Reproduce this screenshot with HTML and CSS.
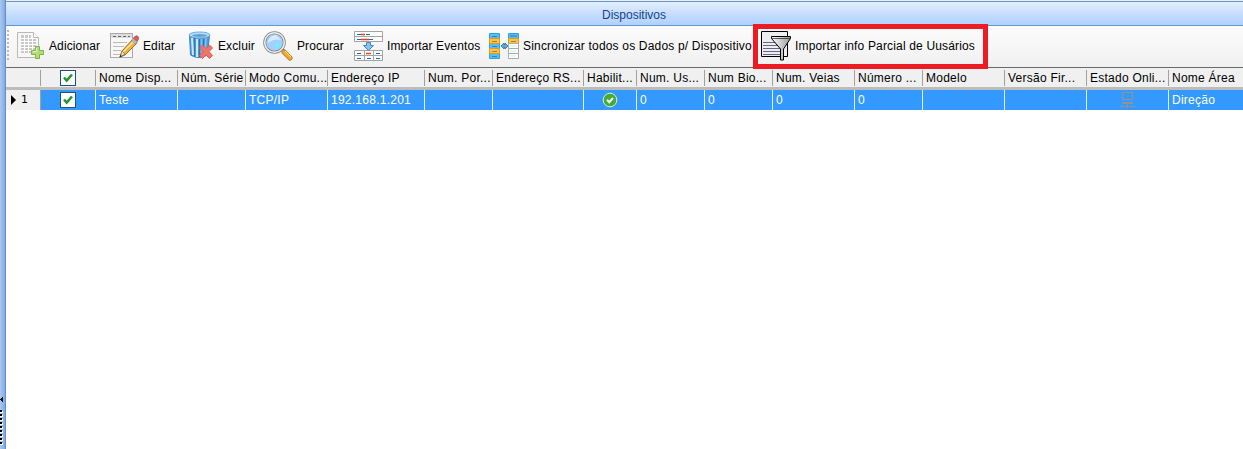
FILE: index.html
```html
<!DOCTYPE html>
<html lang="pt">
<head>
<meta charset="utf-8">
<title>Dispositivos</title>
<link rel="stylesheet" href="styles.css">
</head>
<body>
<div class="app">
  <aside class="splitter">
    <svg class="collapse" width="5" height="54" viewBox="0 0 5 54" shape-rendering="crispEdges">
      <path d="M3 0v7L0 3.500z" fill="#111"/>
      <path d="M1 15v34" stroke="#fff" stroke-width="4" stroke-dasharray="2 2"/>
      <path d="M.5 14v34" stroke="#000" stroke-width="3" stroke-dasharray="2 2"/>
    </svg>
  </aside>
  <main class="panel">
    <h1 class="title">Dispositivos</h1>
    <nav class="toolbar">
      <span class="grip"></span>
      <button class="tool add">
        <svg width="30" height="30" viewBox="0 0 30 30">
          <path d="M.5 1.500h16l5 5v20H.5z" fill="#f7f7f7" stroke="#b9b9b9"/>
          <path d="M16.500 1.500v5h5" fill="#fff" stroke="#b9b9b9"/>
          <path d="M4 4h10v4h5v14H4z" fill="#c8c8c8"/>
          <path d="M4 7.500h15M4 10.500h15M4 13.500h15M4 16.500h15M4 19.500h15M7.500 4v18M11.500 4v18M15.500 8v14" stroke="#fff"/>
          <path d="M18.500 15.500h4v4h4v4h-4v4h-4v-4h-4v-4h4z" fill="#b5dc76" stroke="#7fb343"/>
          <path d="M19.500 17v3.500H16" fill="none" stroke="#e4f6c4"/>
        </svg><span>Adicionar</span>
      </button>
      <button class="tool edit">
        <svg width="30" height="28" viewBox="0 0 30 28">
          <rect x=".5" y="1.500" width="22" height="24" fill="#f8f8f8" stroke="#aaa"/>
          <path d="M1 2h21v4H1z" fill="#ddd"/><path d="M3 4.500h17" stroke="#666" stroke-dasharray="3 2"/>
          <path d="M3 10.500h14M3 14.500h11M3 18.500h8M3 22.500h7" stroke="#bbb"/>
          <path d="M10 25l2-6L23 7l4 4-12 12z" fill="#f3b43c" stroke="#8c6b3c"/>
          <path d="M13 20L24 9" stroke="#ffe493" stroke-width="1.500"/>
          <path d="M10 25l2-6 3 3z" fill="#f4dfbd" stroke="#8c6b3c" stroke-width=".7"/><path d="M9.500 25.500l1-3 1.500 2z" fill="#333"/>
          <path d="M21.500 8l4 4 2-2-4-4z" fill="#aebdcb" stroke="#8090a0" stroke-width=".6"/>
          <path d="M23.500 6l2-2q3-1 3 3l-1.500 2.500z" fill="#e65a50" stroke="#ae3930" stroke-width=".7"/>
        </svg><span>Editar</span>
      </button>
      <button class="tool delete">
        <svg width="26" height="29" viewBox="0 0 26 29">
          <path d="M1.500 4l1 20q8 5 17 0l2-20z" fill="#4b9ade" stroke="#3b82bf"/>
          <path d="M4 7l1 17M9 8v18" stroke="#c9eaff" stroke-width="2"/><path d="M13.500 8v18M18 7l-1 18" stroke="#85c3ef" stroke-width="1.500"/>
          <path d="M6.500 7v18M11.500 8v18M15.500 8v18" stroke="#2f74b5"/>
          <ellipse cx="11.500" cy="4" rx="10.500" ry="3" fill="#b9ddf4" stroke="#6faeda"/>
          <ellipse cx="11.500" cy="4.500" rx="7.500" ry="1.500" fill="#5ca5d8"/>
          <path d="M11.500 17l3-3 3.500 3.500 3.500-3.500 3 3-3.500 3.500 3.500 4-3 3-3.500-3.500-3.500 3.500-3-3 3.500-4z" fill="#ed7468" stroke="#d85e54"/>
        </svg><span>Excluir</span>
      </button>
      <button class="tool search">
        <svg width="31" height="30" viewBox="0 0 31 30">
          <path d="M19 18l3 3" stroke="#777" stroke-width="3"/>
          <path d="M21 21l6 6" stroke="#a77528" stroke-width="5" stroke-linecap="round"/><path d="M21 21l6 6" stroke="#f3a829" stroke-width="3.500" stroke-linecap="round"/><path d="M22 20l6 6" stroke="#ffe58d"/>
          <circle cx="11.500" cy="11.500" r="9.800" fill="#a4d0ff" stroke="#858585" stroke-width="3"/>
          <circle cx="11.500" cy="11.500" r="9.800" fill="none" stroke="#eee" stroke-width="1.500"/>
          <path d="M5 12q0-7 8-8l5 5q-7-2-13 3z" fill="#d7edff"/><circle cx="14.500" cy="14.500" r="2.500" fill="#70eeff"/>
        </svg><span>Procurar</span>
      </button>
      <button class="tool events">
        <svg width="30" height="30" viewBox="0 0 30 30">
          <g fill="#fff" stroke="#a3a3a3"><path d="M.5.500h28v10H.5zM.5 19.500h28v10H.5z"/><path d="M.5 5.500h28M.5 24.500h28M10.500 19.500v10M19.500 19.500v10"/></g>
          <path d="M3 3.500h4M12 3.500h4M3 8.500h4M15 8.500h4M3 22.500h4M22 22.500h4M3 27.500h4M13 27.500h4M22 27.500h4" stroke="#1769b7"/>
          <path d="M7 3.500h4M7 8.500h8M12 22.500h5" stroke="#e34319" stroke-width="1.400"/>
          <path d="M12.500 11.500h4v3h3l-5 5-5-5h3z" fill="#8ac3f2" stroke="#4388c4"/>
        </svg><span>Importar Eventos</span>
      </button>
      <button class="tool sync">
        <svg width="30" height="26" viewBox="0 0 30 26">
          <g fill="#58bdf0" stroke="#3c9bd5"><path d="M.5.500h10v5H.5zM.5 10.500h10v5H.5zM.5 20.500h10v5H.5zM19.500.500h10v5h-10z"/></g>
          <g fill="#ffc345" stroke="#d79a2e"><path d="M.5 5.500h10v5H.5zM.5 15.500h10v5H.5zM19.500 5.500h10v5h-10z"/></g>
          <path d="M19.500 10.500h10v15h-10zM19.500 15.500h10M19.500 20.500h10" fill="#fff" stroke="#a6adad"/>
          <path d="M3 3l1 1 1-1 1 1 1-1 1 1M3 13l1 1 1-1 1 1 1-1 1 1M3 23l1 1 1-1 1 1 1-1 1 1" fill="none" stroke="#2478ac" stroke-width=".8"/>
          <path d="M3 8l1 1 1-1 1 1 1-1 1 1M3 18l1 1 1-1 1 1 1-1 1 1M22 8l1 1 1-1 1 1 1-1 1 1" fill="none" stroke="#8c742f" stroke-width=".8"/>
          <path d="M21 3h7" stroke="#1783d0"/><path d="M21 13h6M21 18h6M21 23h6" stroke="#c3f3ef"/>
          <path d="M12 13l3-3v1.500h1V10l3 3-3 3v-1.500h-1V16z" fill="#65a8d8" stroke="#3c7caf"/>
        </svg><span>Sincronizar todos os Dados p/ Dispositivo</span>
      </button>
      <button class="tool partial">
        <svg width="31" height="30" viewBox="0 0 31 30">
          <defs><linearGradient id="funnel"><stop stop-color="#fff"/><stop offset="1" stop-color="#999"/></linearGradient></defs>
          <path d="M.5.500h26v25H.5z" fill="#eeeef0" stroke="#000"/>
          <path d="M2 11.500h20M2 14.500h20M2 17.500h20M2 20.500h20M2 23.500h20" stroke="#65658a"/>
          <path d="M10.500 5.500h19v2L22.500 18v11h-3v-11L10.500 7.500z" fill="url(#funnel)" stroke="#000"/>
          <path d="M11 7.500h18" stroke="#000" stroke-width=".6"/>
        </svg><span>Importar info Parcial de Uusários</span>
      </button>
    </nav>
    <section class="table">
      <div class="row head">
        <span></span>
        <span class="center"><i class="check"><svg width="14" height="14" viewBox="0 0 14 14"><path d="M3 6.500l2.700 3L11 3.500" fill="none" stroke="#219332" stroke-width="2.500"/></svg></i></span>
        <span>Nome Disp...</span><span>Núm. Série</span><span>Modo Comu...</span><span>Endereço IP</span><span>Num. Por...</span><span>Endereço RS...</span><span>Habilit...</span><span>Num. Us...</span><span>Num Bio...</span><span>Num. Veias</span><span>Número ...</span><span>Modelo</span><span>Versão Fir...</span><span>Estado Onli...</span><span>Nome Área</span>
      </div>
      <div class="row data">
        <span class="index"><svg width="5" height="10" viewBox="0 0 5 10"><path d="M0 0l5 5-5 5z"/></svg>1</span>
        <span class="center"><i class="check"><svg width="14" height="14" viewBox="0 0 14 14"><path d="M3 6.500l2.700 3L11 3.500" fill="none" stroke="#219332" stroke-width="2.500"/></svg></i></span>
        <span>Teste</span><span></span><span>TCP/IP</span><span>192.168.1.201</span><span></span><span></span>
        <span class="center"><svg width="16" height="16" viewBox="0 0 16 16"><circle cx="8" cy="8" r="6.800" fill="#43ad36" stroke="#d4efd0"/><path d="M5 7.800l2.200 2.400L11 6" fill="none" stroke="#fff" stroke-width="2"/></svg></span>
        <span>0</span><span>0</span><span>0</span><span>0</span><span></span><span></span>
        <span class="center"><svg width="15" height="16" viewBox="0 0 15 16" fill="none" stroke="#96938f"><path d="M2.500.500h10v7h-10zM2 10.500h11M2 11.500h11M7.500 12v4M0 14.500h15"/></svg></span>
        <span>Direção</span>
      </div>
    </section>
  </main>
</div>
</body>
</html>
```
FILE: styles.css
```css
* { box-sizing: border-box; }
body {
  margin: 0;
  overflow: hidden;
  background: #fff;
  color: #000;
  font: 12px/16px "Liberation Sans", Arial, sans-serif;
}
.app { display: flex; width: 1243px; height: 449px; }
.splitter {
  flex: 0 0 6px;
  padding-top: 396px;
  border-right: 1px solid #6a8fc8;
  background: linear-gradient(90deg, #a9c8f2, #8fb4ea 70%, #81a5dc);
}
.collapse { display: block; }
.panel { flex: 1; min-width: 0; border-top: 1px solid #f0f0ec; }
.title {
  height: 25px;
  margin: 0;
  padding: 5px 0 0 19px;
  border-top: 1px solid #6593cf;
  border-bottom: 1px solid #6593cf;
  background: linear-gradient(#e3efff, #c4dcff 55%, #afd2ff);
  color: #15428b;
  font-size: 12px;
  font-weight: normal;
  text-align: center;
}
.toolbar {
  display: flex;
  height: 41px;
  background: linear-gradient(#fcfcfc, #f0f0f0);
}
.grip {
  width: 2px;
  height: 30px;
  margin: 4px 8px 0 1px;
  background: repeating-linear-gradient(#b8b8b8 0 2px, transparent 2px 4px);
}
.tool {
  display: flex;
  align-items: center;
  flex: none;
  height: 39px;
  padding: 0;
  border: 0;
  background: none;
  color: #000;
  font: inherit;
  letter-spacing: .12px;
  white-space: nowrap;
}
.tool svg { flex: none; }
.add { width: 93px; gap: 2px; }
.edit { width: 78px; gap: 3px; }
.delete { width: 75px; gap: 4px; }
.search { width: 91px; gap: 3px; }
.events { width: 135px; gap: 3px; }
.sync { width: 264px; gap: 4px; letter-spacing: .18px; }
.partial {
  width: 235px;
  height: 45px;
  margin-top: -2px;
  padding: 0 0 2px 3px;
  gap: 3px;
  border: 5px solid #ed1c24;
  letter-spacing: .16px;
  z-index: 1;
}
.row {
  display: grid;
  grid-template-columns: 34px 55px 82px 68px 82px 97px 68px 91px 53px 68px 68px 82px 68px 82px 82px 82px 75px;
  letter-spacing: .25px;
}
.row > span {
  display: flex;
  align-items: center;
  overflow: hidden;
  padding-left: 3px;
  white-space: nowrap;
}
.head {
  height: 23px;
  padding-top: 1px;
  border-top: 1px solid #696969;
  border-bottom: 3px solid #bcbcbc;
  background: #f0f0f0;
}
.head > span { height: 16px; margin-top: 1px; border-left: 1px solid #a0a0a0; }
.head > span:first-child { border: 0; }
.data { height: 20px; background: #39f; color: #fff; }
.data > span { border-left: 1px solid #e6effa; }
.data > .index {
  gap: 5px;
  padding-left: 5px;
  border: 0;
  background: #f0f0f0;
  color: #000;
  font: 11px/16px "DejaVu Sans", sans-serif;
}
.data > .index + .center { border-color: #a0a0a0; }
.row > .center { justify-content: center; padding: 0; }
.check {
  display: block;
  width: 16px;
  height: 16px;
  border: 1px solid #1c5180;
  background: #fff;
}
.check svg { display: block; }
```
